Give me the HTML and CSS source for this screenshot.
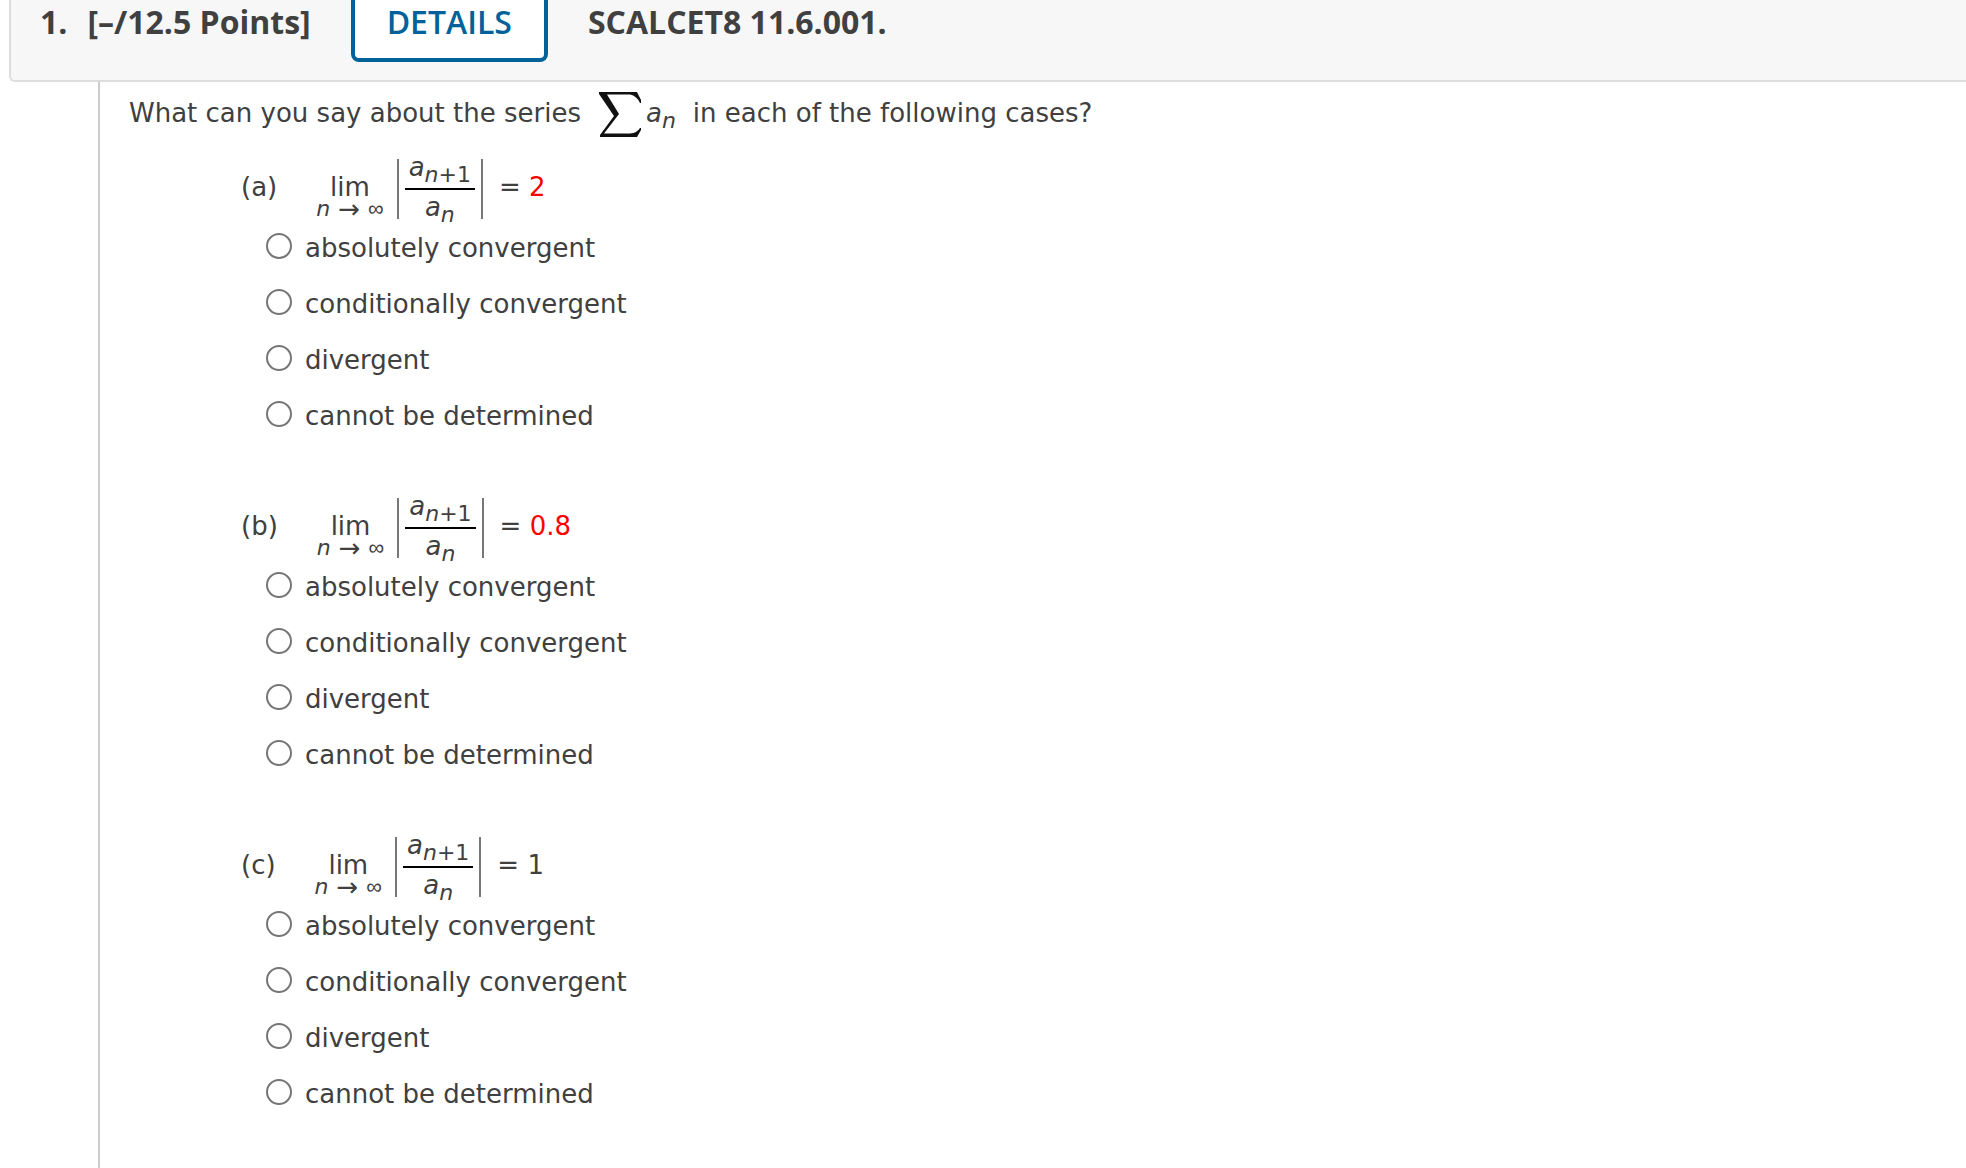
FILE: index.html
```
<!DOCTYPE html>
<html lang="en">
<head>
<meta charset="utf-8">
<title>SCALCET8 11.6.001.</title>
<link rel="stylesheet" href="styles.css">
</head>
<body>
<header class="question-header">
  <span class="number">1.</span>
  <span class="points">[–/12.5 Points]</span>
  <button type="button" class="details">DETAILS</button>
  <span class="source">SCALCET8 11.6.001.</span>
</header>
<main class="question">
  <p class="prompt">
    <span>What can you say about the series</span>
    <svg class="sigma" viewBox="0 0 42 46" role="img" aria-label="sum"><path d="M0 0H38L42 8V11H41Q38 4 31 2.500H8L20 22L5 41.500H31Q38 41 41 36H42V38L38 45H1V43L15 24L0 2Z"/></svg>
    <span class="term"><i>a<sub>n</sub></i></span>
    <span>in each of the following cases?</span>
  </p>
  <section class="part">
    <div class="equation">
      <span class="part-label">(a)</span>
      <span class="limit"><span>lim</span><span class="under"><i>n</i><span class="arrow">→</span><span class="infinity">∞</span></span></span>
      <span class="bar"></span>
      <span class="fraction"><span class="num"><i>a<sub>n</sub></i><sub>+1</sub></span><span class="den"><i>a<sub>n</sub></i></span></span>
      <span class="bar"></span>
      <span class="result">= <span class="value">2</span></span>
    </div>
    <div class="options">
      <label class="option"><input type="radio" name="a"><span>absolutely convergent</span></label>
      <label class="option"><input type="radio" name="a"><span>conditionally convergent</span></label>
      <label class="option"><input type="radio" name="a"><span>divergent</span></label>
      <label class="option"><input type="radio" name="a"><span>cannot be determined</span></label>
    </div>
  </section>
  <section class="part">
    <div class="equation">
      <span class="part-label">(b)</span>
      <span class="limit"><span>lim</span><span class="under"><i>n</i><span class="arrow">→</span><span class="infinity">∞</span></span></span>
      <span class="bar"></span>
      <span class="fraction"><span class="num"><i>a<sub>n</sub></i><sub>+1</sub></span><span class="den"><i>a<sub>n</sub></i></span></span>
      <span class="bar"></span>
      <span class="result">= <span class="value">0.8</span></span>
    </div>
    <div class="options">
      <label class="option"><input type="radio" name="b"><span>absolutely convergent</span></label>
      <label class="option"><input type="radio" name="b"><span>conditionally convergent</span></label>
      <label class="option"><input type="radio" name="b"><span>divergent</span></label>
      <label class="option"><input type="radio" name="b"><span>cannot be determined</span></label>
    </div>
  </section>
  <section class="part">
    <div class="equation">
      <span class="part-label">(c)</span>
      <span class="limit"><span>lim</span><span class="under"><i>n</i><span class="arrow">→</span><span class="infinity">∞</span></span></span>
      <span class="bar"></span>
      <span class="fraction"><span class="num"><i>a<sub>n</sub></i><sub>+1</sub></span><span class="den"><i>a<sub>n</sub></i></span></span>
      <span class="bar"></span>
      <span class="result">= 1</span>
    </div>
    <div class="options">
      <label class="option"><input type="radio" name="c"><span>absolutely convergent</span></label>
      <label class="option"><input type="radio" name="c"><span>conditionally convergent</span></label>
      <label class="option"><input type="radio" name="c"><span>divergent</span></label>
      <label class="option"><input type="radio" name="c"><span>cannot be determined</span></label>
    </div>
  </section>
</main>
</body>
</html>
```
FILE: styles.css
```
* { box-sizing: border-box; }
body {
  margin: 0;
  min-height: 100vh;
  display: flex;
  flex-direction: column;
  background: #fff;
  color: #404040;
  font-family: Verdana, "DejaVu Sans", sans-serif;
  font-size: 26px;
}
.question-header {
  display: flex;
  align-items: flex-start;
  margin-left: 9px;
  padding: 0 0 18px 29px;
  border: 2px solid #ddd;
  border-width: 0 0 2px 2px;
  border-bottom-left-radius: 6px;
  background: #f7f7f7;
  font: bold 32px/44px "Open Sans", sans-serif;
}
.number { margin-right: 20px; }
.points { margin-right: 40px; }
.details {
  height: 62px;
  margin: 0 40px 0 0;
  padding: 0 32px 14px;
  border: 4px solid #006298;
  border-top: 0;
  border-radius: 0 0 8px 8px;
  background: #fff;
  color: #006298;
  font: 600 32px/44px "Open Sans", sans-serif;
}
.question {
  flex: 1;
  margin-left: 98px;
  padding: 10px 0 8px 29px;
  border-left: 2px solid #ccc;
}
.prompt {
  display: flex;
  align-items: flex-start;
  margin: 0 0 18px;
  line-height: 42px;
}
.sigma { width: 42px; height: 46px; margin: 0 5px 0 18px; fill: #111; }
.term { margin-right: 17px; }
sub { font-size: 22px; line-height: 0; vertical-align: -6px; }
.part { padding: 0 0 59px 112px; }
.equation { display: flex; align-items: flex-start; line-height: 24px; }
.part-label, .limit, .result { margin-top: 19px; }
.part-label { margin-right: 39px; }
.limit { display: flex; flex-direction: column; align-items: center; margin-right: 13px; }
.under { display: flex; gap: 8px; font-size: 22px; line-height: 20px; }
.arrow { font-family: "DejaVu Sans", sans-serif; font-size: 26px; }
.infinity { font-family: "Liberation Sans", Arial, sans-serif; }
.bar { width: 2px; height: 60px; margin-top: 3px; background: #777; }
.fraction { display: flex; flex-direction: column; margin: 0 6px; text-align: center; }
.num { padding: 0 4px 10px; border-bottom: 2px solid #000; line-height: 22px; }
.den { line-height: 34px; }
.result { margin-left: 16px; }
.value { color: #f00; }
.options { display: flex; flex-direction: column; align-items: flex-start; gap: 12px; padding-left: 25px; }
.option { display: flex; align-items: center; gap: 13px; height: 44px; }
.option span { padding-top: 3px; }
.option input {
  appearance: none;
  width: 26px;
  height: 26px;
  margin: 0;
  border: 2px solid #767676;
  border-radius: 50%;
  background: #fff;
}
.option input:checked { box-shadow: inset 0 0 0 5px #fff; background: #006298; }
```
